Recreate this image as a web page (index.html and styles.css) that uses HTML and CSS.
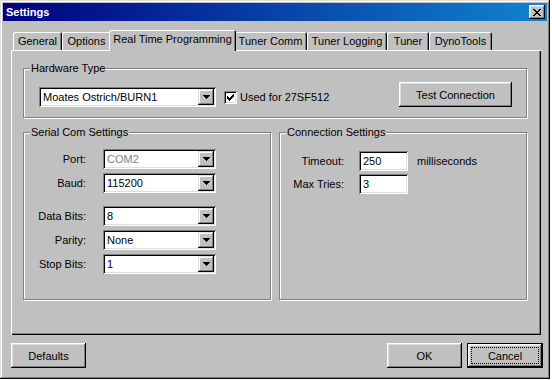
FILE: index.html
```html
<!DOCTYPE html>
<html lang="en">
<head>
  <meta charset="UTF-8">
  <title>Settings</title>
  <link rel="stylesheet" href="styles.css">
</head>
<body>
  <div class="window">
    <div class="titlebar">
      <span class="title">Settings</span>
      <span class="close">
        <svg width="8" height="7" viewBox="0 0 8 7"><path d="M0 0h2v1h-2z M6 0h2v1h-2z M1 1h2v1h-2z M5 1h2v1h-2z M2 2h4v1h-4z M3 3h2v1h-2z M2 4h4v1h-4z M1 5h2v1h-2z M5 5h2v1h-2z M0 6h2v1h-2z M6 6h2v1h-2z" fill="#000"/></svg>
      </span>
    </div>

    <div class="content">
      <!-- tab strip -->
      <div class="tabs">
        <div class="tab tab-general">General</div>
        <div class="tab tab-options">Options</div>
        <div class="tab tab-rtp active">Real Time Programming</div>
        <div class="tab tab-comm">Tuner Comm</div>
        <div class="tab tab-logging">Tuner Logging</div>
        <div class="tab tab-tuner">Tuner</div>
        <div class="tab tab-dyno">DynoTools</div>
      </div>

      <div class="panel">
        <fieldset class="group hardware">
          <legend>Hardware Type</legend>
          <div class="hw-row">
            <div class="combo combo-hw">
              <span class="combo-value">Moates Ostrich/BURN1</span>
              <span class="combo-btn"><svg width="7" height="4" viewBox="0 0 7 4"><path d="M0 0h7v1h-7z M1 1h5v1h-5z M2 2h3v1h-3z M3 3h1v1h-1z" fill="#000"/></svg></span>
            </div>
            <label class="check">
              <span class="checkbox"><svg width="7" height="7" viewBox="0 0 7 7"><path d="M6 0h1v1h-1z M5 1h2v1h-2z M0 2h1v1h-1z M4 2h3v1h-3z M0 3h2v1h-2z M3 3h3v1h-3z M0 4h5v1h-5z M1 5h3v1h-3z M2 6h1v1h-1z" fill="#000"/></svg></span>
              Used for 27SF512
            </label>
            <button class="btn btn-test">Test Connection</button>
          </div>
        </fieldset>

        <div class="groups">
          <fieldset class="group serial">
            <legend>Serial Com Settings</legend>
            <div class="form-row">
              <span class="label">Port:</span>
              <div class="combo combo-small disabled">
                <span class="combo-value">COM2</span>
                <span class="combo-btn"><svg width="7" height="4" viewBox="0 0 7 4"><path d="M0 0h7v1h-7z M1 1h5v1h-5z M2 2h3v1h-3z M3 3h1v1h-1z" fill="#000"/></svg></span>
              </div>
            </div>
            <div class="form-row">
              <span class="label">Baud:</span>
              <div class="combo combo-small">
                <span class="combo-value">115200</span>
                <span class="combo-btn"><svg width="7" height="4" viewBox="0 0 7 4"><path d="M0 0h7v1h-7z M1 1h5v1h-5z M2 2h3v1h-3z M3 3h1v1h-1z" fill="#000"/></svg></span>
              </div>
            </div>
            <div class="form-row spaced">
              <span class="label">Data Bits:</span>
              <div class="combo combo-small">
                <span class="combo-value">8</span>
                <span class="combo-btn"><svg width="7" height="4" viewBox="0 0 7 4"><path d="M0 0h7v1h-7z M1 1h5v1h-5z M2 2h3v1h-3z M3 3h1v1h-1z" fill="#000"/></svg></span>
              </div>
            </div>
            <div class="form-row">
              <span class="label">Parity:</span>
              <div class="combo combo-small">
                <span class="combo-value">None</span>
                <span class="combo-btn"><svg width="7" height="4" viewBox="0 0 7 4"><path d="M0 0h7v1h-7z M1 1h5v1h-5z M2 2h3v1h-3z M3 3h1v1h-1z" fill="#000"/></svg></span>
              </div>
            </div>
            <div class="form-row">
              <span class="label">Stop Bits:</span>
              <div class="combo combo-small">
                <span class="combo-value">1</span>
                <span class="combo-btn"><svg width="7" height="4" viewBox="0 0 7 4"><path d="M0 0h7v1h-7z M1 1h5v1h-5z M2 2h3v1h-3z M3 3h1v1h-1z" fill="#000"/></svg></span>
              </div>
            </div>
          </fieldset>

          <fieldset class="group connection">
            <legend>Connection Settings</legend>
            <div class="form-row">
              <span class="label">Timeout:</span>
              <span class="field">250</span>
              <span class="unit">milliseconds</span>
            </div>
            <div class="form-row">
              <span class="label">Max Tries:</span>
              <span class="field">3</span>
            </div>
          </fieldset>
        </div>
      </div>

      <div class="actions">
        <button class="btn">Defaults</button>
        <button class="btn btn-ok">OK</button>
        <button class="btn btn-cancel"><span class="focus">Cancel</span></button>
      </div>
    </div>
  </div>
</body>
</html>
```

FILE: styles.css
```css
* {
  box-sizing: border-box;
}

body {
  margin: 0;
  background: #fff;
  font-family: "Liberation Sans", Arial, sans-serif;
  font-size: 11px;
  color: #000;
}

.window {
  width: 550px;
  height: 379px;
  padding: 3px;
  background: #c0c0c0;
  box-shadow: inset -1px -1px #000, inset 1px 1px #dfdfdf, inset -2px -2px #808080, inset 2px 2px #fff;
}

.titlebar {
  height: 18px;
  display: flex;
  align-items: center;
  justify-content: space-between;
  padding: 0 2px 0 3px;
  background: linear-gradient(to right, #000080, #1084d0);
  color: #fff;
  font-weight: bold;
}

.close {
  width: 16px;
  height: 14px;
  display: flex;
  align-items: center;
  justify-content: center;
  background: #c0c0c0;
  box-shadow: inset -1px -1px #000, inset 1px 1px #fff, inset -2px -2px #808080, inset 2px 2px #dfdfdf;
}

.content {
  padding: 9px 0 0 8px;
}

/* tabs */
.tabs {
  display: flex;
  align-items: flex-end;
  height: 20px;
  padding-left: 2px;
}

.tab {
  height: 18px;
  padding-top: 3px;
  line-height: 13px;
  text-align: center;
  white-space: nowrap;
  background: #c0c0c0;
  border-radius: 2px 2px 0 0;
  box-shadow: inset 1px 1px #fff, inset -1px 0 #000, inset -2px 0 #808080;
}

.tab.active {
  height: 21px;
  margin: 0 -2px -1px;
  position: relative;
  z-index: 1;
}

.tab-general { width: 49px; }
.tab-options { width: 49px; }
.tab-rtp { width: 127px; }
.tab-comm { width: 73px; }
.tab-logging { width: 80px; }
.tab-tuner { width: 42px; }
.tab-dyno { width: 63px; }

.panel {
  width: 530px;
  height: 285px;
  padding: 12px 12px 0;
  box-shadow: inset 1px 1px #fff, inset -1px -1px #000, inset -2px -2px #808080;
}

/* group boxes */
.group {
  margin: 0;
  min-width: 0;
  border: 1px solid #808080;
  box-shadow: inset 1px 1px #fff, 1px 1px #fff;
}

.group legend {
  padding: 0 1px;
  line-height: 13px;
  background: #c0c0c0;
}

.hardware {
  width: 504px;
  padding: 7px 14px 10px 15px;
}

.hardware legend {
  margin-left: -9px;
}

.hw-row {
  display: flex;
  align-items: flex-end;
}

.check {
  height: 20px;
  display: flex;
  align-items: center;
  gap: 3px;
  margin-left: 8px;
}

.checkbox {
  width: 13px;
  height: 13px;
  display: flex;
  align-items: center;
  justify-content: center;
  background: #fff;
  box-shadow: inset 1px 1px #808080, inset -1px -1px #fff, inset 2px 2px #000, inset -2px -2px #dfdfdf;
}

.groups {
  display: flex;
  gap: 8px;
  margin-top: 8px;
}

.serial,
.connection {
  width: 248px;
  height: 174px;
  padding: 10px 8px 0;
}

.serial legend,
.connection legend {
  margin-left: -2px;
}

.connection {
  padding-top: 12px;
}

.form-row {
  display: flex;
  align-items: center;
  height: 20px;
  margin-bottom: 4px;
}

.connection .form-row {
  margin-bottom: 3px;
}

.form-row.spaced {
  margin-top: 13px;
}

.label {
  width: 54px;
  margin-right: 17px;
  text-align: right;
}

.connection .label {
  width: 56px;
  margin-right: 15px;
}

/* combo boxes and fields */
.combo {
  height: 20px;
  display: flex;
  padding: 2px;
  background: #fff;
  box-shadow: inset 1px 1px #808080, inset -1px -1px #fff, inset 2px 2px #000, inset -2px -2px #dfdfdf;
}

.combo-hw { width: 177px; }
.combo-small { width: 113px; }

.combo-value {
  flex: 1;
  padding-left: 2px;
  line-height: 16px;
  white-space: nowrap;
}

.combo.disabled .combo-value {
  color: #808080;
}

.combo-btn {
  width: 16px;
  height: 16px;
  display: flex;
  align-items: center;
  justify-content: center;
  background: #c0c0c0;
  box-shadow: inset -1px -1px #000, inset 1px 1px #dfdfdf, inset -2px -2px #808080, inset 2px 2px #fff;
}

.field {
  width: 49px;
  height: 20px;
  padding-left: 4px;
  line-height: 20px;
  background: #fff;
  box-shadow: inset 1px 1px #808080, inset -1px -1px #fff, inset 2px 2px #000, inset -2px -2px #dfdfdf;
}

.unit {
  margin-left: 9px;
}

/* buttons */
.btn {
  width: 75px;
  height: 25px;
  padding: 0;
  border: 0;
  font: inherit;
  color: #000;
  background: #c0c0c0;
  box-shadow: inset -1px -1px #000, inset 1px 1px #fff, inset -2px -2px #808080, inset 2px 2px #dfdfdf;
}

.btn-test {
  width: 113px;
  margin-left: auto;
}

.actions {
  display: flex;
  width: 532px;
  margin-top: 8px;
}

.btn-ok {
  margin-left: auto;
}

.btn-cancel {
  width: 76px;
  margin-left: 5px;
  padding: 4px;
  border: 1px solid #000;
  box-shadow: inset -1px -1px #000, inset 1px 1px #fff, inset -2px -2px #808080, inset 2px 2px #dfdfdf;
}

.focus {
  display: flex;
  align-items: center;
  justify-content: center;
  height: 100%;
  outline: 1px dotted #000;
}
```
